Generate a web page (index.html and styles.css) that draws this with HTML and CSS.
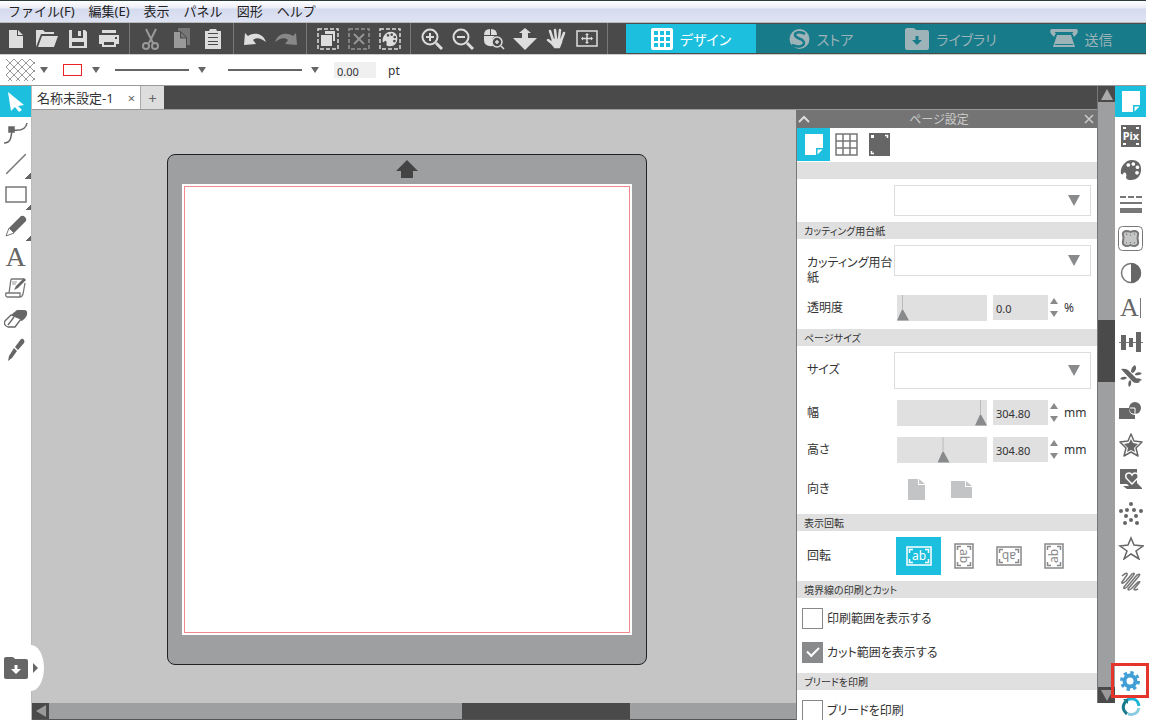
FILE: index.html
```html
<!DOCTYPE html>
<html lang="ja">

<head>
    <meta charset="utf-8">
    <meta name="viewport" content="width=device-width, initial-scale=1">
    <title>名称未設定-1</title>
    <link rel="stylesheet" href="styles.css">
</head>

<body>
    <!-- icons used more than once -->
    <svg class="defs" width="0" height="0">
        <symbol id="i-page" viewBox="0 0 22 24">
            <path fill="#fff" d="M2 1h18v14h-7v7H2z" />
            <path fill="#fff" d="M14.500 21.500v-5h5z" />
        </symbol>
        <symbol id="i-palette" viewBox="0 0 24 24">
            <path fill="currentColor" fill-rule="evenodd" d="M1 16C0 8 6 1 13 1c7 0 10 5 10 10 0 7-4 12-11 12-5 0-6-2-5-5 0-2-1-4-3-3l-1 2zM9 4.500a2 2 0 1 0 .1 0zM14.500 3.500a2 2 0 1 0 .1 0zM19 7a2 2 0 1 0 .1 0zM18.500 13a2 2 0 1 0 .1 0z" />
        </symbol>
        <symbol id="i-folder" viewBox="0 0 24 22">
            <path fill="currentColor" fill-rule="evenodd" d="M0 2q0-2 2-2h6q2 0 3 2h11q2 0 2 2v16q0 2-2 2H2q-2 0-2-2zM10.500 8v4H7l5 5 5-5h-3.500V8z" />
        </symbol>
        <symbol id="i-frame" viewBox="0 0 26 20">
            <path fill="none" stroke="currentColor" stroke-width="1.500" d="M1 1h24v18H1zM3.500 7V3.500H7M19 3.500h3.500V7M22.500 13v3.500H19M7 16.500H3.500V13" />
        </symbol>
    </svg>

    <div class="app">
        <nav class="menubar">
            <a href="#">ファイル(F)</a>
            <a href="#">編集(E)</a>
            <a href="#">表示</a>
            <a href="#">パネル</a>
            <a href="#">図形</a>
            <a href="#">ヘルプ</a>
        </nav>

        <header class="toolbar">
            <div class="group">
                <button aria-label="新規"><svg width="14" height="18"><path fill="#ddd" d="M0 0h8v6h6v12H0zM9 0l5 5H9z" /></svg></button>
                <button aria-label="開く"><svg width="22" height="17"><path fill="#ddd" d="M0 17V0h7l2 2h9v2H5zM6 6h16l-4 11H2z" /></svg></button>
                <button aria-label="保存"><svg width="18" height="18"><path fill="#ddd" fill-rule="evenodd" d="M0 0h3v8h11V0h2l2 2v16H0zM3 12v4h12v-4zM9 1h3v5H9z" /></svg></button>
                <button aria-label="印刷"><svg width="20" height="17"><path fill="#ddd" fill-rule="evenodd" d="M3 0h14v3H3zM0 5h20v9h-3v3H3v-3H0zM5 12v3h10v-3zM16 7v2h2V7z" /></svg></button>
            </div>
            <div class="group">
                <button aria-label="切り取り"><svg width="18" height="22" fill="none" stroke="#999" stroke-width="2"><path d="M4 1l7 14M14 1L7 15" /><circle cx="4" cy="18" r="3" /><circle cx="13" cy="18" r="3" /></svg></button>
                <button aria-label="コピー"><svg width="17" height="21"><path fill="#777" d="M5 0h12v17H5z" /><path fill="#999" stroke="#494a49" d="M.5 3.500h7l6 6v11H.5zM7.500 4v6h6" /></svg></button>
                <button aria-label="貼り付け"><svg width="16" height="20"><path fill="#ddd" d="M0 2h4l1-2h6l1 2h4v18H0z" /><path stroke="#494a49" d="M3 4.500h10M3 8.500h10M3 12.500h10M3 15.500h10" /></svg></button>
            </div>
            <div class="group">
                <button aria-label="元に戻す"><svg width="22" height="15"><path fill="#ddd" d="M1 2l3 3C10 1 19 2 22 11 17 7 12 6 9 9l3 4-12 1z" /></svg></button>
                <button aria-label="やり直す"><svg width="22" height="15"><path fill="#888" d="M21 2l-3 3C12 1 3 2 0 11 5 7 10 6 13 9l-3 4 12 1z" /></svg></button>
            </div>
            <div class="group">
                <button aria-label="すべて選択"><svg width="22" height="22"><path class="dash" d="M1 1h20v20H1z" /><path fill="#ddd" d="M8 3h10v10h-2V6H8zM4 7h11v11H4z" /></svg></button>
                <button aria-label="選択解除"><svg width="22" height="22" opacity=".5"><path class="dash" d="M1 1h20v20H1z" /><path stroke="#ddd" stroke-width="2" d="M6 6l10 10M16 6L6 16" /></svg></button>
                <button aria-label="色で選択"><svg width="22" height="22"><path class="dash" d="M1 1h20v20H1z" /><use href="#i-palette" x="3" y="3" width="16" height="16" /></svg></button>
            </div>
            <div class="group">
                <button aria-label="ズームイン"><svg width="22" height="22" fill="none" stroke="#ddd" stroke-width="2"><circle cx="9" cy="9" r="7.500" /><path d="M5 9h8M9 5v8" /><path stroke-width="3" d="M15 15l6 6" /></svg></button>
                <button aria-label="ズームアウト"><svg width="22" height="22" fill="none" stroke="#ddd" stroke-width="2"><circle cx="9" cy="9" r="7.500" /><path d="M5 9h8" /><path stroke-width="3" d="M15 15l6 6" /></svg></button>
                <button aria-label="選択ズーム"><svg width="22" height="22"><path fill="#ddd" d="M1 7q0-6 6-6v6zM8 1q6 0 6 6H8zM1 8h11q-5 3-2 10-9 1-9-6z" /><g fill="none" stroke="#ddd" stroke-width="1.500"><circle cx="14" cy="14" r="5" /><path d="M12 14h4M14 12v4M18 18l3 3" /></g></svg></button>
                <button aria-label="ドラッグズーム"><svg width="26" height="22"><path fill="#ddd" d="M13 0l6 5h-3v5h9L13 22 1 10h9V5H7z" /></svg></button>
                <button aria-label="パン"><svg width="20" height="22" fill="none" stroke="#ddd" stroke-width="2.500" stroke-linecap="round"><path d="M7 12L4 3M10 11L9 2M13 11l1-9M15 13l3-8M7 16l-5-4" /><path fill="#ddd" d="M7 12h7l1 2-2 5H9l-3-4z" /></svg></button>
                <button aria-label="ウィンドウに合わせる"><svg width="22" height="17" fill="none" stroke="#ddd"><path d="M1 1h20v15H1z" stroke-width="1.500" /><path d="M6 8.500h10M11 4v9" stroke-width="1.500" /><path d="M7 6.500L5 8.500l2 2zM15 6.500l2 2-2 2zM9 5l2-2 2 2zM9 12l2 2 2-2z" fill="#ddd" stroke="none" /></svg></button>
            </div>
            <nav class="modes">
                <a href="#" class="active"><svg width="22" height="22"><path fill="#fff" fill-rule="evenodd" d="M2 0h18q2 0 2 2v18q0 2-2 2H2q-2 0-2-2V2q0-2 2-2zM3 3v4h4V3zM9 3v4h4V3zM15 3v4h4V3zM3 9v4h4V9zM9 9v4h4V9zM15 9v4h4V9zM3 15v4h4v-4zM9 15v4h4v-4zM15 15v4h4v-4z" /></svg>デザイン</a>
                <a href="#"><svg width="21" height="22"><circle cx="10.500" cy="11" r="10" fill="#9db3b7" /><path fill="none" stroke="#177b8a" stroke-width="2.500" d="M16 6C12 3 6 4 6 7c0 4 9 3 9 8 0 3-5 5-12 2" /></svg>ストア</a>
                <a href="#"><svg width="24" height="22"><use href="#i-folder" width="24" height="22" /></svg>ライブラリ</a>
                <a href="#"><svg width="28" height="19"><path fill="#9db3b7" d="M1 0h26q2 3-1 6l-2 2-2-4H6L4 8 2 6Q-1 3 1 0zM7 6h14l4 12H3z" /><path stroke="#177b8a" d="M5 3.500h18M5 15.500h18" /></svg>送信</a>
            </nav>
        </header>

        <div class="optionbar">
            <svg class="pattern" width="29" height="22">
                <defs>
                    <pattern id="hatch" width="8" height="8" patternUnits="userSpaceOnUse">
                        <path d="M0 0l8 8M8 0L0 8" stroke="#999" fill="none" />
                    </pattern>
                </defs>
                <path fill="url(#hatch)" d="M0 0h29v22H0z" />
            </svg>
            <i class="down"></i>
            <span class="linecolor"></span>
            <i class="down"></i>
            <span class="line"></span>
            <i class="down"></i>
            <span class="line second"></span>
            <i class="down"></i>
            <input id="thickness" type="text" value="0.00">
            <label for="thickness">pt</label>
        </div>

        <div class="main">
            <aside class="tools">
                <button class="active" aria-label="選択"><svg width="16" height="20"><path fill="#fff" d="M0 0l16 13-6 1 4 4-3 2-4-5-4 4z" /></svg></button>
                <button aria-label="ポイント編集"><svg width="24" height="22" fill="none" stroke="#666" stroke-width="1.500"><path d="M0 21c7 0 7-6 8-13 8 1 14 0 15-7" /><path fill="#666" d="M5 5h5v5H5z" /></svg></button>
                <button class="more" aria-label="線"><svg width="20" height="20"><path stroke="#777" stroke-width="1.500" d="M0 20L20 0" /></svg></button>
                <button class="more" aria-label="長方形"><svg width="22" height="17"><path fill="none" stroke="#777" stroke-width="1.500" d="M1 1h20v15H1z" /></svg></button>
                <button class="more" aria-label="フリーハンド"><svg width="22" height="22"><path fill="#666" d="M16 1q2-1 4 1t1 4L9 18l-5-5z" /><path fill="none" stroke="#777" d="M4 13l5 5-8 3z" /></svg></button>
                <button aria-label="テキスト" class="letter">A</button>
                <button aria-label="スケッチ"><svg width="22" height="20" fill="none" stroke="#777" stroke-width="1.300"><path d="M6 1h13M6 1L4 15M20 5l-2 11q-1 3-3 3M1 15h14v4H2q-2-1-1-4z" /><path d="M7 4h5M7 6h4" stroke="#bbb" /><path fill="#666" stroke="none" d="M19 0l2 2-8 8-4 2 2-4z" /></svg></button>
                <button aria-label="消しゴム"><svg width="24" height="19"><path fill="#666" d="M13 1h7q4 0 3 5-1 3-5 6l-11-6z" /><path fill="#fff" stroke="#666" stroke-width="1.300" d="M7 6l10 4-6 8H4q-5-2-3-6zM10 8l-6 8" /></svg></button>
                <button aria-label="ナイフ"><svg width="18" height="24"><path fill="#666" d="M14 1q2-1 3 1t0 3l-6 7-3-3zM7 10l3 3-5 7-4 3 1-5z" /></svg></button>
                <button class="drawer" aria-label="ライブラリを開く"><svg width="24" height="22"><use href="#i-folder" width="24" height="22" /></svg><i></i></button>
            </aside>

            <div class="workspace">
                <div class="doctabs">
                    <div class="doctab">名称未設定-1<button aria-label="閉じる">×</button></div>
                    <button class="addtab" aria-label="追加">+</button>
                </div>

                <div class="document">
                    <div class="view">
                        <div class="canvas">
                            <div class="mat">
                                <svg width="22" height="18"><path fill="#444" d="M11 0l11 11h-5v7H5v-7H0z" /></svg>
                                <div class="sheet"><div class="cutline"></div></div>
                            </div>
                        </div>
                        <div class="hscroll"><i class="left"></i><span class="thumb"></span></div>
                    </div>

                    <section class="panel">
                        <div class="panelhead">
                            <svg width="12" height="8" fill="none" stroke="#ddd" stroke-width="2"><path d="M1 7l5-5 5 5" /></svg>
                            <span>ページ設定</span>
                            <button aria-label="パネルを閉じる"><svg width="10" height="10" stroke="#ccc" stroke-width="1.500"><path d="M1 1l8 8M9 1L1 9" /></svg></button>
                        </div>
                        <div class="paneltabs">
                            <button class="active" aria-label="ページ"><svg width="22" height="24"><use href="#i-page" width="22" height="24" /></svg></button>
                            <button aria-label="グリッド"><svg width="23" height="23"><path fill="none" stroke="#777" stroke-width="1.500" d="M1 1h21v21H1zM1 8h21M1 15h21M8 1v21M15 1v21" /></svg></button>
                            <button aria-label="トンボ"><svg width="21" height="23"><path fill="#666" d="M0 0h21v23H0z" /><path fill="#fff" d="M2 2h3v3H2z" /><path fill="none" stroke="#fff" stroke-width="1.500" d="M16 2.500h2.500V5M2.500 18v2.500H5" /></svg></button>
                        </div>

                        <h3></h3>
                        <div class="row">
                            <span class="name"></span>
                            <div class="select"><select aria-label="カッティングマシン"><option></option></select></div>
                        </div>

                        <h3>カッティング用台紙</h3>
                        <div class="row top">
                            <label class="name" for="mat">カッティング用台紙</label>
                            <div class="select"><select id="mat"><option></option></select></div>
                        </div>
                        <div class="row tall">
                            <label class="name" for="alpha">透明度</label>
                            <input id="alpha" type="range" value="0">
                            <input class="value" type="text" value="0.0" aria-label="透明度">
                            <span class="spin"></span><span class="unit">%</span>
                        </div>

                        <h3>ページサイズ</h3>
                        <div class="row size">
                            <label class="name" for="size">サイズ</label>
                            <div class="select big"><select id="size"><option></option></select></div>
                        </div>
                        <div class="row">
                            <label class="name" for="width">幅</label>
                            <input id="width" type="range" value="100">
                            <input class="value" type="text" value="304.80" aria-label="幅">
                            <span class="spin"></span><span class="unit">mm</span>
                        </div>
                        <div class="row">
                            <label class="name" for="height">高さ</label>
                            <input id="height" type="range" value="52">
                            <input class="value" type="text" value="304.80" aria-label="高さ">
                            <span class="spin"></span><span class="unit">mm</span>
                        </div>
                        <div class="row orient">
                            <span class="name">向き</span>
                            <button aria-label="縦"><svg width="17" height="21"><path fill="#c3c4c5" d="M0 0h10v6h7v15H0zM11 0l6 5h-6z" /></svg></button>
                            <button aria-label="横"><svg width="21" height="17"><path fill="#c3c4c5" d="M0 0h14v6h7v11H0zM15 0l6 5h-6z" /></svg></button>
                        </div>

                        <h3>表示回転</h3>
                        <div class="row rotate">
                            <span class="name">回転</span>
                            <button class="active" aria-label="0度"><svg width="26" height="20"><use href="#i-frame" width="26" height="20" /><text x="13" y="14" text-anchor="middle" fill="currentColor">ab</text></svg></button>
                            <button class="r90" aria-label="90度"><svg width="26" height="20"><use href="#i-frame" width="26" height="20" /><text x="13" y="14" text-anchor="middle" fill="currentColor">ab</text></svg></button>
                            <button class="r180" aria-label="180度"><svg width="26" height="20"><use href="#i-frame" width="26" height="20" /><text x="13" y="14" text-anchor="middle" fill="currentColor">ab</text></svg></button>
                            <button class="r270" aria-label="270度"><svg width="26" height="20"><use href="#i-frame" width="26" height="20" /><text x="13" y="14" text-anchor="middle" fill="currentColor">ab</text></svg></button>
                        </div>

                        <h3>境界線の印刷とカット</h3>
                        <div class="checks">
                            <label><input type="checkbox">印刷範囲を表示する</label>
                            <label><input type="checkbox" checked>カット範囲を表示する</label>
                        </div>

                        <h3>ブリードを印刷</h3>
                        <div class="checks">
                            <label><input type="checkbox">ブリードを印刷</label>
                        </div>
                    </section>
                </div>
            </div>

            <div class="vscroll"><i class="up"></i><span class="thumb"></span><i class="bottom"></i></div>

            <aside class="rail">
                <div class="railtop">
                    <button class="active" aria-label="ページ設定"><svg width="22" height="24"><use href="#i-page" width="22" height="24" /></svg></button>
                    <button aria-label="PixScan"><svg width="20" height="22"><path fill="#666" d="M0 0h20v22H0z" /><path fill="#fff" d="M2 2h3v2H2zM15 2h3v2h-3zM2 18h3v2H2zM15 18h3v2h-3z" /><text x="10" y="15" text-anchor="middle" fill="#fff" class="pix">Pix</text></svg></button>
                    <button aria-label="塗りつぶし"><svg width="22" height="22"><use href="#i-palette" width="22" height="22" /></svg></button>
                    <button aria-label="線スタイル"><svg width="22" height="18"><path fill="#777" d="M0 0h6v2H0zM8 0h6v2H8zM16 0h6v2h-6zM0 6h22v2H0zM0 12h22v5H0z" /></svg></button>
                    <button aria-label="トレース"><svg width="25" height="25"><rect x=".5" y=".5" width="24" height="24" rx="4" fill="#fff" stroke="#777" /><path fill="#c4c5c5" stroke="#777" stroke-width="2" d="M8 5q3 0 4.500 1Q14 5 17 5q4 1 3 4-1 3 0 6 1 4-3 5-3 0-4.500-1Q11 20 8 20q-4-1-3-5 1-3 0-6-1-3 3-4z" /><path fill="none" stroke="#555" stroke-dasharray="1 3" d="M8 8q3 1 4.500 1Q15 8 17 8M8 17q3-1 9 0" /></svg></button>
                    <button aria-label="コントラスト"><svg width="22" height="22"><circle cx="11" cy="11" r="9.500" fill="#fff" stroke="#777" stroke-width="1.500" /><path fill="#666" d="M11 1a10 10 0 0 1 0 20z" /></svg></button>
                    <button aria-label="テキストスタイル" class="letter">A<i></i></button>
                    <button aria-label="整列"><svg width="24" height="20"><path stroke="#777" d="M0 10.500h24" /><path fill="#666" d="M2 3h5v15H2zM10 6h4v9h-4zM17 0h5v20h-5z" /></svg></button>
                    <button aria-label="複製"><svg width="22" height="22" fill="#666"><path d="M1 4q4-1 7 1l12 12q-3 2-7 0zM11 7q0-5 4-7 3 4-2 8zM15 9q2-3 7-1-2 3-7 2zM15 14q4-2 7 1-3 2-7 0zM11 16q1 4-2 6-2-4 1-7zM7 13q-3 3-7 1 2-3 6-2z" /></svg></button>
                    <button aria-label="変更"><svg width="23" height="18"><path fill="#666" d="M0 6h10q0 7 6 7v4H0z" /><circle cx="16" cy="6" r="6" fill="#666" /><path fill="none" stroke="#fff" d="M11 6h5v6" /></svg></button>
                    <button aria-label="オフセット"><svg width="24" height="24"><path fill="#fff" stroke="#666" stroke-width="1.500" stroke-linejoin="round" d="M12 1l3 7 8 1-6 6 2 8-7-4-7 4 2-8-6-6 8-1z" /><path fill="#666" d="M12 6l2 4 5 1-4 4 1 4-4-2-4 2 1-4-4-4 5-1z" /></svg></button>
                    <button aria-label="ライノストーン"><svg width="22" height="20"><path fill="#666" d="M0 0h17v14l5 5v1H7l-4-3h6l-2-2H0z" /><path fill="#666" stroke="#fff" stroke-width="1.500" d="M12 15L6 9q-1-5 3-5 2 0 3 2 1-2 3-2 4 0 3 5z" /></svg></button>
                    <button aria-label="点描"><svg width="24" height="24" fill="#666"><circle cx="12" cy="2" r="2" /><circle cx="2" cy="9" r="2" /><circle cx="8" cy="8" r="2" /><circle cx="15" cy="8" r="2" /><circle cx="22" cy="9" r="2" /><circle cx="7" cy="14" r="2" /><circle cx="17" cy="14" r="2" /><circle cx="12" cy="18" r="2" /><circle cx="6" cy="21" r="2" /><circle cx="18" cy="21" r="2" /></svg></button>
                    <button aria-label="星"><svg width="26" height="24"><path fill="#fff" stroke="#666" stroke-width="1.500" d="M13 2l3 7 9 1-7 5 3 8-8-5-7 5 3-8-7-5 8-1z" /></svg></button>
                    <button aria-label="スケッチ線"><svg width="20" height="20"><path fill="none" stroke="#777" stroke-width="1.500" stroke-linejoin="round" d="M1 4q6-5 5-1L1 10q-1 3 4-1l6-7q4-2 1 2L3 15q-1 3 3 0L16 3q4-2 2 1L7 17q0 2 3 0l7-7q3-1 1 1l-5 6q0 2 4 0" /></svg></button>
                </div>
                <div class="railbottom">
                    <button class="marked" aria-label="環境設定"><svg width="20" height="20"><circle cx="10" cy="10" r="5.500" fill="none" stroke="#419fd5" stroke-width="4" /><circle cx="10" cy="10" r="8.500" fill="none" stroke="#419fd5" stroke-width="3" stroke-dasharray="3.340 3.340" /></svg></button>
                    <button aria-label="同期"><svg width="20" height="20" fill="none" stroke-width="3"><path stroke="#1cb5d8" d="M6 3q10-4 12 6" /><path stroke="#8accdf" d="M18 11q-2 8-11 6" /><path stroke="#197a8b" d="M6 17Q-1 11 5 4" /><path fill="#197a8b" stroke="none" d="M2 2h5v5z" /></svg></button>
                </div>
            </aside>
        </div>
    </div>
</body>

</html>
```

FILE: styles.css
```css
* {
    box-sizing: border-box;
}

body {
    margin: 0;
    background: #fff;
    color: #333;
    font-family: "Noto Sans", "Noto Sans CJK JP", sans-serif;
    font-size: 13px;
    font-feature-settings: "palt";
}

button {
    display: flex;
    align-items: center;
    justify-content: center;
    margin: 0;
    padding: 0;
    border: 0;
    background: none;
    color: #666;
    font: inherit;
}

input,
select {
    font: inherit;
    color: inherit;
}

a {
    color: inherit;
    text-decoration: none;
}

svg {
    flex: none;
}

.defs {
    position: absolute;
}

.app {
    display: flex;
    flex-direction: column;
    height: 100vh;
    padding-right: 4px;
    overflow: hidden;
}

.active {
    background: #1cc0de;
}

/* top bars */
.menubar {
    display: flex;
    gap: 14px;
    height: 23px;
    padding-left: 8px;
    border-top: 1px solid #2b3a3a;
    border-bottom: 1px solid #bbb;
    background: linear-gradient(#fff, #eef0f9 30%, #d5dbee 40%, #dfe4f4);
    color: #222;
    font-feature-settings: normal;
    line-height: 20px;
}

.toolbar {
    display: flex;
    height: 32px;
    border-bottom: 1px solid #ccc;
    background: #494a49;
}

.group {
    display: flex;
    padding-right: 5px;
    margin-right: 5px;
    border-right: 1px solid #777;
}

.group button {
    width: 31px;
    color: #ddd;
}

.dash {
    fill: none;
    stroke: #ddd;
    stroke-width: 1.5;
    stroke-dasharray: 4 2;
}

.modes {
    display: flex;
    flex: 1;
    margin-left: 13px;
    padding: 1px 0;
}

.modes a {
    display: flex;
    flex: 1;
    align-items: center;
    justify-content: center;
    gap: 7px;
    background: #177b8a;
    color: #9db3b7;
    font-size: 14px;
}

.modes .active {
    background: #1cc0de;
    color: #fff;
}

.optionbar {
    display: flex;
    align-items: center;
    height: 31px;
    padding-left: 6px;
    border-bottom: 1px solid #999;
}

.down {
    margin: 0 15px 0 5px;
    border: solid transparent;
    border-width: 6px 4px 0;
    border-top-color: #666;
}

.linecolor {
    width: 19px;
    height: 12px;
    margin-right: 5px;
    border: 1px solid #e22;
}

.line {
    width: 74px;
    height: 2px;
    margin-right: 4px;
    background: #666;
}

.line.second {
    margin-left: 7px;
}

.optionbar input {
    width: 42px;
    height: 16px;
    margin-right: 12px;
    padding: 3px 3px 0;
    border: 0;
    background: #f0f0f0;
    font-size: 11px;
}

.optionbar label {
    font-size: 12px;
}

.main {
    display: flex;
    flex: 1;
    min-height: 0;
}

/* left tools */
.tools {
    position: relative;
    z-index: 1;
    flex: none;
    width: 32px;
    border-right: 1px solid #bbb;
    background: #fff;
}

.tools button {
    width: 31px;
    height: 31px;
}

.tools .more {
    background: linear-gradient(135deg, transparent 50%, #666 50%) right bottom / 6px 6px no-repeat;
}

.letter {
    font-family: "Liberation Serif", serif;
    font-size: 28px;
}

.tools .drawer {
    position: absolute;
    bottom: 29px;
    left: 0;
    justify-content: flex-start;
    gap: 5px;
    width: 44px;
    height: 46px;
    padding-left: 4px;
    border-radius: 0 13px 13px 0 / 0 23px 23px 0;
    background: #fff;
}

.drawer i {
    border: solid transparent;
    border-width: 5px 0 5px 5px;
    border-left-color: #666;
}

/* document */
.workspace {
    display: flex;
    flex: 1;
    flex-direction: column;
    min-width: 0;
}

.doctabs {
    display: flex;
    flex: none;
    height: 24px;
    border-bottom: 1px solid #999;
    background: #494a49;
}

.doctab {
    display: flex;
    align-items: center;
    gap: 14px;
    padding: 0 5px;
    background: #fff;
    line-height: 20px;
}

.addtab {
    width: 24px;
    border-left: 1px solid #aaa;
    background: #ddd;
    font-size: 15px;
}

.document {
    display: flex;
    flex: 1;
    min-height: 0;
}

.view {
    display: flex;
    flex: 1;
    flex-direction: column;
    min-width: 0;
}

.canvas {
    display: flex;
    flex: 1;
    align-items: center;
    justify-content: center;
    min-height: 0;
    padding: 6px 14px 0 0;
    background: #c5c5c5;
}

.mat {
    display: flex;
    flex-direction: column;
    align-items: center;
    height: 87%;
    aspect-ratio: 479 / 510;
    padding: 5px 14px 29px;
    border: 1px solid #222;
    border-radius: 8px;
    background: #9e9fa1;
}

.sheet {
    flex: 1;
    align-self: stretch;
    margin-top: 6px;
    padding: 2px;
    background: #fff;
}

.cutline {
    height: 100%;
    border: 1px solid #f08a8e;
}

.hscroll {
    display: flex;
    flex: none;
    height: 17px;
    background: #9e9fa1;
    border-bottom: 1px solid #555;
}

.hscroll i,
.vscroll i {
    display: grid;
    place-items: center;
    width: 17px;
    height: 16px;
    background: #494a49;
}

.hscroll i::before,
.vscroll i::before {
    content: "";
    border: 5px solid transparent;
}

.hscroll .left::before {
    border-width: 6px 10px 6px 0;
    border-right-color: #999;
}

.hscroll .thumb {
    width: 22%;
    margin-left: 54%;
    background: #494a49;
}

.vscroll {
    display: flex;
    flex: none;
    flex-direction: column;
    width: 18px;
    margin-bottom: 17px;
    border-left: 1px solid #777;
    background: #9e9fa1;
}

.vscroll .up::before {
    border-width: 0 6px 11px;
    border-bottom-color: #aaa;
}

.vscroll .bottom {
    margin-top: auto;
}

.vscroll .bottom::before {
    border-width: 11px 6px 0;
    border-top-color: #999;
}

.vscroll .thumb {
    height: 10%;
    margin-top: 218px;
    background: #494a49;
}

/* page setup panel */
.panel {
    flex: none;
    width: 301px;
    border-left: 1px solid #777;
    background: #fff;
    font-size: 12px;
    overflow: hidden;
}

.panelhead {
    display: flex;
    align-items: center;
    justify-content: space-between;
    height: 18px;
    padding: 0 3px 0 1px;
    background: #747474;
    color: #ccc;
    line-height: 17px;
}

.panelhead span {
    margin-right: 16px;
}

.paneltabs {
    display: flex;
    height: 34px;
}

.paneltabs button {
    width: 33px;
    height: 33px;
}

.panel h3 {
    height: 17px;
    margin: 0;
    padding-left: 7px;
    background: #e0e0e0;
    font-size: 10px;
    font-weight: normal;
    line-height: 18px;
}

.row {
    display: flex;
    align-items: center;
    min-height: 37px;
    padding: 0 6px 0 10px;
}

h3:first-of-type + .row {
    min-height: 43px;
}

.row.top {
    align-items: flex-start;
    min-height: 50px;
    padding-top: 6px;
}

.row.top .name {
    padding-top: 10px;
    line-height: 15px;
}

.row.tall {
    min-height: 40px;
    padding-bottom: 3px;
}

.row.size {
    min-height: 48px;
}

.name {
    flex: none;
    width: 87px;
    padding-bottom: 2px;
}

.select {
    position: relative;
    flex: 1;
    height: 31px;
}

.select.big {
    height: 37px;
}

.select select {
    width: 100%;
    height: 100%;
    border: 1px solid #ddd;
    border-radius: 0;
    background: #fff;
    appearance: none;
}

.select::after {
    content: "";
    position: absolute;
    top: 10px;
    right: 11px;
    border: solid transparent;
    border-width: 11px 6px 0;
    border-top-color: #888a8b;
    pointer-events: none;
}

.select.big::after {
    top: 13px;
}

input[type="range"] {
    width: 90px;
    height: 26px;
    margin: 0 6px 0 3px;
    background: #e0e0e0;
    appearance: none;
}

input[type="range"]::-webkit-slider-thumb {
    width: 12px;
    height: 26px;
    background: linear-gradient(#bbb 15px, #888a8b 15px);
    clip-path: polygon(5px 0, 6px 0, 6px 15px, 12px 26px, 0 26px, 5px 15px);
    appearance: none;
}

.value {
    width: 55px;
    height: 25px;
    padding: 1px 3px 0;
    border: 0;
    background: #e0e0e0;
    font-size: 11px;
}

.spin {
    display: flex;
    flex-direction: column;
    gap: 7px;
    margin: 0 6px 0 2px;
}

.spin::before,
.spin::after {
    content: "";
    border: solid transparent;
    border-width: 0 4px 6px;
    border-bottom-color: #888a8b;
}

.spin::after {
    border-width: 6px 4px 0;
    border-top-color: #888a8b;
}

.row.orient {
    min-height: 42px;
    margin-bottom: 4px;
}

.orient button {
    width: 45px;
}

.row.rotate {
    min-height: 50px;
}

.rotate .name {
    margin-right: 2px;
}

.rotate button {
    width: 45px;
    height: 38px;
    color: #888;
}

.rotate button.active {
    color: #fff;
}

.rotate text {
    font: 12px "Noto Sans", sans-serif;
}

.r90 svg {
    transform: rotate(90deg);
}

.r180 svg {
    transform: rotate(180deg);
}

.r270 svg {
    transform: rotate(270deg);
}

.checks {
    padding: 3px 5px 4px;
}

.checks label {
    display: flex;
    align-items: center;
    gap: 4px;
    height: 34px;
}

.checks input {
    display: grid;
    place-items: center;
    width: 21px;
    height: 21px;
    margin: 0;
    border: 1px solid #888;
    background: #fff;
    appearance: none;
}

.checks input:checked {
    background: #888a8b;
}

.checks input:checked::before {
    content: "";
    width: 10px;
    height: 5px;
    margin-bottom: 3px;
    border: solid #fff;
    border-width: 0 0 2px 2px;
    transform: rotate(-45deg);
}

/* right rail */
.rail {
    display: flex;
    flex: none;
    flex-direction: column;
    justify-content: space-between;
    width: 31px;
}

.rail button {
    width: 31px;
    height: 31px;
}

.railtop {
    display: flex;
    flex-direction: column;
    justify-content: space-between;
    height: 512px;
}

.rail .letter i {
    width: 1px;
    height: 20px;
    margin-left: 1px;
    background: #777;
}

.rail .letter {
    font-size: 26px;
}

.pix {
    font: bold 11px "Noto Sans", sans-serif;
}

.railbottom button {
    height: 26px;
}

/* frame sits over the scrollbar next to it */
.railbottom .marked {
    position: relative;
    z-index: 1;
    width: 38px;
    height: 35px;
    margin: 0 -4px -4px;
    border: 3px solid #e5352b;
}
```
